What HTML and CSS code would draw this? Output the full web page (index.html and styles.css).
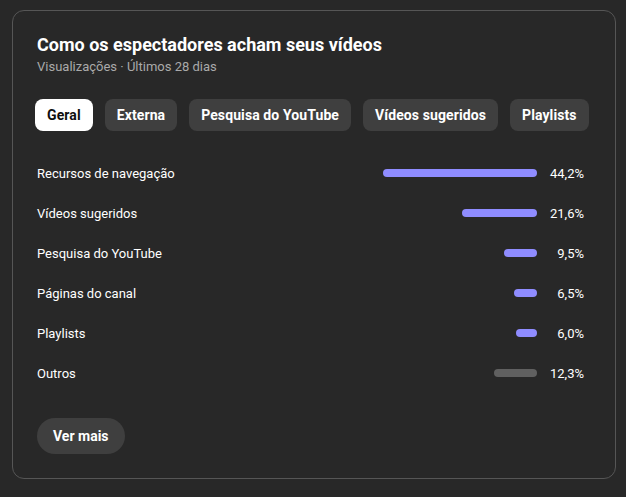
FILE: index.html
```html
<!DOCTYPE html>
<html lang="pt-BR">
<head>
  <meta charset="UTF-8">
  <title>Como os espectadores acham seus vídeos</title>
  <link rel="stylesheet" href="styles.css">
</head>
<body>
  <div class="card">
    <h1 class="card-title">Como os espectadores acham seus vídeos</h1>
    <p class="card-subtitle">Visualizações · Últimos 28 dias</p>

    <div class="chips">
      <button class="chip active">Geral</button>
      <button class="chip">Externa</button>
      <button class="chip">Pesquisa do YouTube</button>
      <button class="chip">Vídeos sugeridos</button>
      <button class="chip">Playlists</button>
    </div>

    <ul class="sources">
      <li class="source">
        <span class="source-name">Recursos de navegação</span>
        <span class="bar" style="width: 154px"></span>
        <span class="source-value">44,2%</span>
      </li>
      <li class="source">
        <span class="source-name">Vídeos sugeridos</span>
        <span class="bar" style="width: 75px"></span>
        <span class="source-value">21,6%</span>
      </li>
      <li class="source">
        <span class="source-name">Pesquisa do YouTube</span>
        <span class="bar" style="width: 33px"></span>
        <span class="source-value">9,5%</span>
      </li>
      <li class="source">
        <span class="source-name">Páginas do canal</span>
        <span class="bar" style="width: 23px"></span>
        <span class="source-value">6,5%</span>
      </li>
      <li class="source">
        <span class="source-name">Playlists</span>
        <span class="bar" style="width: 21px"></span>
        <span class="source-value">6,0%</span>
      </li>
      <li class="source">
        <span class="source-name">Outros</span>
        <span class="bar other" style="width: 43px"></span>
        <span class="source-value">12,3%</span>
      </li>
    </ul>

    <button class="more-button">Ver mais</button>
  </div>
</body>
</html>
```

FILE: styles.css
```css
body {
  margin: 0;
  padding: 10px 10px 0 12px;
  background: #282828;
  color: #fff;
  font-family: Roboto, 'Liberation Sans', sans-serif;
}

.card {
  width: 604px;
  height: 469px;
  box-sizing: border-box;
  border: 1px solid #565656;
  border-radius: 12px;
  padding: 22px 24px 24px;
  display: flex;
  flex-direction: column;
}

.card-title {
  margin: 0;
  font-size: 18px;
  line-height: 24px;
  font-weight: 700;
}

.card-subtitle {
  margin: 0;
  font-size: 13px;
  line-height: 20px;
  color: #aaa;
}

.chips {
  display: flex;
  gap: 12px;
  margin: 22px 0 0 -2px;
}

.chip {
  height: 32px;
  padding: 0 12px;
  border: none;
  border-radius: 8px;
  background: #3f3f3f;
  color: #fff;
  font-family: inherit;
  font-size: 14px;
  font-weight: 700;
  letter-spacing: 0.1px;
  cursor: pointer;
}

.chip.active {
  background: #fff;
  color: #0f0f0f;
}

.sources {
  list-style: none;
  margin: 22px 0 0;
  padding: 0 7px 0 0;
}

.source {
  display: flex;
  align-items: center;
  height: 40px;
  font-size: 13px;
}

.source-name {
  flex: 1;
}

.bar {
  height: 8px;
  border-radius: 4px;
  background: #8f8cff;
}

.bar.other {
  background: #606060;
}

.source-value {
  width: 47px;
  text-align: right;
}

.more-button {
  align-self: flex-start;
  margin-top: 25px;
  height: 36px;
  padding: 0 16px;
  border: none;
  border-radius: 18px;
  background: #3f3f3f;
  color: #fff;
  font-family: inherit;
  font-size: 14px;
  font-weight: 700;
  cursor: pointer;
}
```
